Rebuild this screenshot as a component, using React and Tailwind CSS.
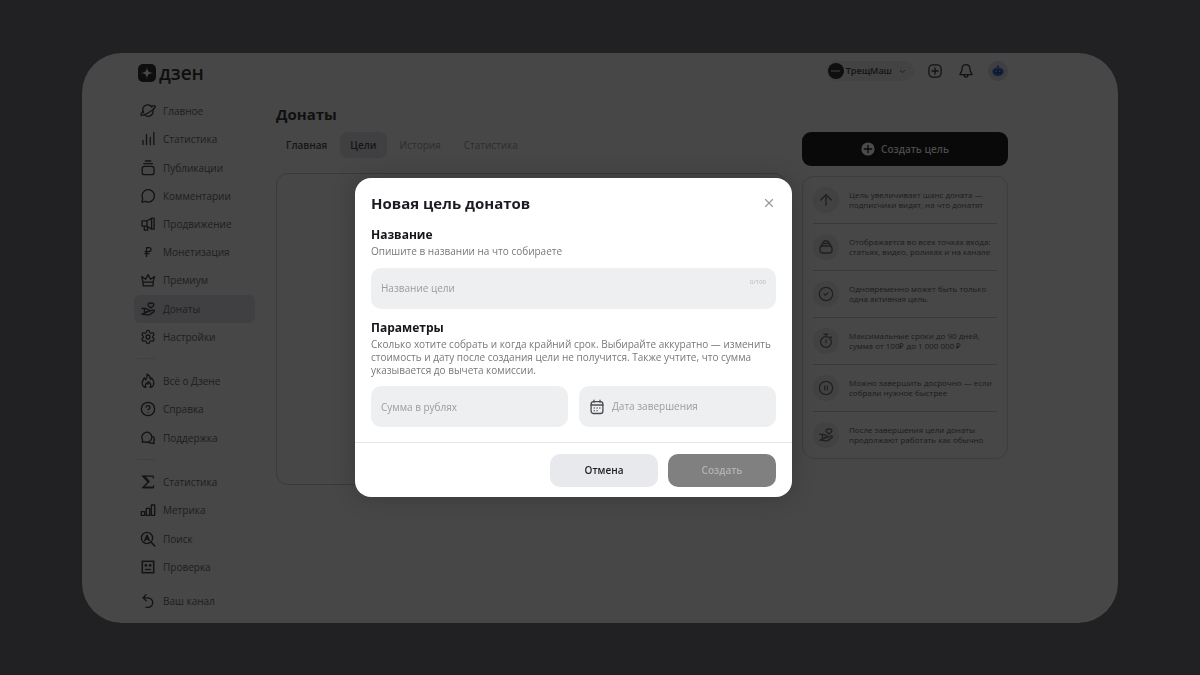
import { useState } from "react";
import { ArrowUp, ChevronDown, CircleCheck, CircleHelp, CirclePause, RussianRuble, Settings, X } from "lucide-react";

function Icon({ children, className = "size-4" }) {
  return (
    <svg
      viewBox="0 0 16 16"
      fill="none"
      stroke="currentColor"
      strokeWidth="1.3"
      strokeLinecap="round"
      strokeLinejoin="round"
      aria-hidden="true"
      className={className}
    >
      {children}
    </svg>
  );
}

const PlanetIcon = () => (
  <Icon>
    <path d="M3.5 9.600A4.900 4.900 0 0 1 11.800 4.100M12.800 6.900a4.900 4.900 0 0 1-7.600 5.400" />
    <path d="M11.400 3.300c1.900-.7 3.400-.8 3.800-.2.6 1-2.100 3.800-5.900 6.100-3.800 2.400-7.800 3.800-8.400 2.800-.4-.7.7-2.100 2.600-3.700" />
  </Icon>
);

const BarsIcon = () => (
  <Icon>
    <path d="M3 9.4v4.2M6.500 3.400v10.200M10.300 6.400v7.200M13.800 1.400v12.200" />
  </Icon>
);

const StackIcon = () => (
  <Icon>
    <rect x="2.2" y="6.3" width="11.8" height="8.4" rx="2.2" />
    <path d="M3.800 3.600h8.600M5.400 1h5.400" />
  </Icon>
);

const BubbleIcon = () => (
  <Icon>
    <path d="M2 14.100l.7-3.500A6.200 6.200 0 1 1 5.500 13.400z" />
  </Icon>
);

const MegaphoneIcon = () => (
  <Icon>
    <path d="M2 4.800h5l4.600-2.600h2.500v10.900h-2.500L7 10.200H2zM7 4.800v5.400M11.600 2.400v10.400M4.300 10.200v3.900h3.500l-.7-3.800" />
  </Icon>
);

const CrownIcon = () => (
  <Icon>
    <path d="M1.700 4.600l4 2.600L8.100 2.600l2.400 4.600 4-2.600-1.400 5.600v3.600H3.100v-3.600zM3.100 10.200h10" />
  </Icon>
);

const HandHeartIcon = () => (
  <Icon>
    <path d="M1.800 7.400h3.400l3.600 1.400c1.100.5.8 1.900-.3 1.900H6.200M9.400 10.200l3.600-1.200c1.300-.4 1.900.9.900 1.600l-4.300 3c-.5.3-1 .4-1.600.3l-6.200-.7zM4.400 7.500v5.800" />
    <path d="M10.900 7 8.500 4.700a1.600 1.600 0 0 1 2.400-2.200 1.600 1.600 0 0 1 2.500 2.200z" />
  </Icon>
);

const FlameIcon = () => (
  <Icon>
    <path d="M5.700 14.400C3.500 13.900 2.200 12.200 2.200 10c0-2.200 1.500-3.300 2-5.200 1 .5 1.400 1.200 1.500 2C7 5.300 7.600 3.500 7 1.200c2 1 3.300 2.700 3.500 5.100.5-.3.8-.7 1-1.300 1.500 1.500 2.300 3.200 2.300 5 0 2.200-1.300 3.900-3.500 4.400" />
    <path d="M5.700 14.200c-.9-1.900-.2-3.100.8-4.300.6.3.9.7 1 1.300.8-.8 1-1.600.8-2.600 2 1.300 3 3.400 1.900 5.600" />
  </Icon>
);

const ChatsIcon = () => (
  <Icon>
    <path d="M2.200 12.200l.4-2.400a5 5 0 1 1 2.300 2z" />
    <path d="M12.800 6.500c1.600 1.200 1.900 3 .9 4.600l.4 2.600-2.200-.7c-1.400.4-2.700.1-3.700-.7" />
  </Icon>
);

const SigmaIcon = () => (
  <Icon>
    <path d="M13.500 4.300 13 2.200H2.800L8.400 8l-5.600 5.700h10.400l.7-2.300" strokeLinecap="butt" strokeLinejoin="miter" />
    <path d="M4 2.600 9 8" strokeWidth="2.200" strokeLinecap="butt" />
    <path d="M3.500 13.400h9.800" strokeWidth="1.700" strokeLinecap="butt" />
  </Icon>
);

const MetricaIcon = () => (
  <Icon>
    <path d="M1.300 9.600h3.400v3.700H1.300zM6.300 6.400h3.400v6.900H6.300zM11.300 3h3.400v10.300h-3.400z" />
  </Icon>
);

const SearchIcon = () => (
  <Icon>
    <circle cx="7" cy="7" r="5.6" />
    <path d="M11.100 11.100l3.600 3.800M4.800 9.600 7 4.300l2.200 5.300M5.500 8.100h3" strokeWidth="1.500" />
  </Icon>
);

const FaceIcon = () => (
  <Icon>
    <rect x="2.300" y="2.300" width="11.400" height="11.400" strokeLinejoin="miter" strokeWidth="1.500" />
    <path d="M4.800 10.500h6.400" strokeLinecap="butt" />
    <circle cx="5.900" cy="6.400" r="1.400" fill="currentColor" stroke="none" />
    <circle cx="10.100" cy="6.400" r="1.400" fill="currentColor" stroke="none" />
  </Icon>
);

const BackIcon = () => (
  <Icon>
    <path d="M6 1.800 3 4.900l3.200 3M3 4.900h5a4.700 4.700 0 0 1 0 9.400H6" />
  </Icon>
);

const TimerIcon = () => (
  <Icon>
    <circle cx="8" cy="9" r="5.4" />
    <path d="M6 1.200h4M8 1.200v2.200M8 7v2.600M12.600 3.700l.8.8" />
  </Icon>
);

const BagIcon = () => (
  <Icon>
    <rect x="2" y="7" width="12" height="7" rx="2.500" />
    <path d="M3.200 7c.2-1.800.9-2.500 2.200-2.500h5.200c1.300 0 2 .7 2.200 2.500M4.900 4.400C5.200 2.700 5.900 2 7 2h2c1.100 0 1.800.7 2.100 2.400" />
  </Icon>
);

const CalendarIcon = () => (
  <Icon className="size-4 shrink-0">
    <rect x="2.100" y="2.700" width="11.800" height="11.800" rx="2.600" />
    <path d="M2.200 6h11.600M5 1.200v2M11 1.200v2" />
    <path d="M5.200 9h.1M8 9h.1M10.800 9h.1M5.200 11.700h.1M8 11.700h.1" />
  </Icon>
);

const NAV = [
  {
    rows: "h-[254px]",
    items: [
      ["Главное", PlanetIcon],
      ["Статистика", BarsIcon],
      ["Публикации", StackIcon],
      ["Комментарии", BubbleIcon],
      ["Продвижение", MegaphoneIcon],
      ["Монетизация", () => <RussianRuble className="size-3" strokeWidth={2.5} />],
      ["Премиум", CrownIcon],
      ["Донаты", HandHeartIcon],
      ["Настройки", () => <Settings className="size-4" strokeWidth={1.9} />],
    ],
  },
  {
    rows: "h-[85px]",
    items: [
      ["Всё о Дзене", FlameIcon],
      ["Справка", () => <CircleHelp className="size-4" strokeWidth={2} />],
      ["Поддержка", ChatsIcon],
    ],
  },
  {
    rows: "h-[113px]",
    items: [
      ["Статистика", SigmaIcon],
      ["Метрика", MetricaIcon],
      ["Поиск", SearchIcon],
      ["Проверка", FaceIcon],
    ],
  },
];

const TIPS = [
  [<ArrowUp className="size-[18px]" strokeWidth={1.8} />, "Цель увеличивает шанс доната —", "подписчики видят, на что донатят"],
  [<BagIcon />, "Отображается во всех точках входа:", "статьях, видео, роликах и на канале"],
  [<CircleCheck className="size-4" strokeWidth={1.8} />, "Одновременно может быть только", "одна активная цель."],
  [<TimerIcon />, "Максимальные сроки до 90 дней,", "сумма от 100₽ до 1 000 000 ₽"],
  [<CirclePause className="size-4" strokeWidth={1.8} />, "Можно завершить досрочно — если", "собрали нужное быстрее"],
  [<HandHeartIcon />, "После завершения цели донаты", "продолжают работать как обычно"],
];

function NavItem({ label, icon: Glyph, active }) {
  return (
    <a
      href="#"
      className={`flex min-h-0 items-center gap-[7px] rounded-md pl-[6px] text-[10px] leading-4 text-[#1d1d1e] ${active ? "bg-[#404042]" : ""}`}
    >
      <span className="flex size-4 items-center justify-center text-[#131314]">
        <Glyph />
      </span>
      {label}
    </a>
  );
}

function Sidebar() {
  return (
    <nav className="w-[121px] shrink-0">
      {NAV.map((group, i) => (
        <div key={group.rows}>
          {i > 0 && <div className="mt-[7px] mb-2 ml-[3px] h-px w-[18px] bg-[#404040]" />}
          <div className={`grid auto-rows-fr ${group.rows}`}>
            {group.items.map(([label, icon]) => (
              <NavItem key={label} label={label} icon={icon} active={label === "Донаты"} />
            ))}
          </div>
        </div>
      ))}
      <div className="mt-[6px] grid h-[28px]">
        <NavItem label="Ваш канал" icon={BackIcon} />
      </div>
    </nav>
  );
}

function TopBar() {
  return (
    <header className="flex h-[44px] items-start justify-between pt-2">
      <a href="#" className="flex items-center gap-[3px] pt-[2px] pl-1 text-[#0e0e0f]">
        <svg viewBox="0 0 18 18" aria-hidden="true" className="size-[18px]">
          <rect width="18" height="18" rx="5" fill="currentColor" />
          <path d="M9 2.500c.2 4.600 1.900 6.300 6.500 6.500-4.600.2-6.300 1.900-6.500 6.500-.2-4.600-1.900-6.300-6.500-6.500 4.600-.2 6.300-1.900 6.500-6.500z" fill="#474747" />
        </svg>
        <span className="text-[19px] leading-5 font-semibold">дзен</span>
      </a>
      <div className="flex items-center text-[#131314]">
        <button type="button" className="flex h-5 items-center rounded-full bg-[#434343] pr-[7px] pl-px text-[9px] leading-4 font-semibold">
          <span className="mr-[2px] flex size-4 items-center rounded-full bg-[#0f0f10]">
            <span className="mx-auto h-[2px] w-[9px] bg-[#29292a]" />
          </span>
          ТрещМаш
          <ChevronDown className="ml-[6px] size-[9px]" />
        </button>
        <button type="button" aria-label="Добавить" className="ml-[13px]">
          <Icon>
            <rect x="1.900" y="1.900" width="12.200" height="12.200" rx="4" />
            <path d="M8 5v6M5 8h6" />
          </Icon>
        </button>
        <button type="button" aria-label="Уведомления" className="ml-[15px]">
          <Icon>
            <path d="M8 1.700c-2.500 0-3.800 1.700-3.900 4-.1 2.300-.9 3.700-2.200 5.900h12.200c-1.300-2.200-2.100-3.600-2.200-5.900-.1-2.300-1.400-4-3.900-4zM6 11.700c.1 3.200 3.900 3.200 4 0" />
          </Icon>
        </button>
        <button type="button" aria-label="Профиль" className="ml-[14px] flex size-5 items-center justify-center rounded-full bg-[#3e3e43]">
          <svg viewBox="0 0 14 14" aria-hidden="true" className="size-[14px]">
            <path d="M7 1.500v2" stroke="#15203a" strokeWidth="2" />
            <ellipse cx="7" cy="7.700" rx="5.700" ry="4.200" fill="#15203a" />
            <rect x="3.500" y="6" width="7" height="3.500" rx="1.700" fill="#0c1427" />
            <circle cx="5.300" cy="7.500" r=".7" fill="#3a4458" />
            <circle cx="8.700" cy="7.500" r=".7" fill="#3a4458" />
          </svg>
        </button>
      </div>
    </header>
  );
}

function Goals() {
  return (
    <section className="min-w-0 flex-1">
      <h1 className="pt-[7px] text-[15px] leading-5 font-bold text-[#101011]">Донаты</h1>
      <div className="mt-2 flex h-[26px] text-[10px] leading-[26px] font-semibold">
        <button type="button" className="px-[10px] text-[#151516]">Главная</button>
        <button type="button" className="ml-[3px] rounded-lg bg-[#404042] px-[10px] text-[#151516]">Цели</button>
        <button type="button" className="ml-[3px] px-[10px] font-medium text-[#2d2d2d]">История</button>
        <button type="button" className="ml-[3px] px-[10px] font-medium text-[#2d2d2d]">Статистика</button>
      </div>
      <div className="mt-[15px] h-[312px] rounded-xl border border-[#3a3a3a]" />
    </section>
  );
}

function Tips() {
  return (
    <aside className="w-[206px] shrink-0 pt-[35px]">
      <button type="button" className="flex h-[34px] w-full items-center justify-center gap-[6px] rounded-[9px] bg-[#090909] text-[10px] font-semibold text-[#4b4b4b]">
        <svg viewBox="0 0 14 14" aria-hidden="true" className="size-[14px]">
          <circle cx="7" cy="7" r="6.600" fill="currentColor" />
          <path d="M7 3.300v7.400M3.300 7h7.400" stroke="#090909" strokeWidth="1.300" strokeLinecap="round" />
        </svg>
        Создать цель
      </button>
      <ul className="mt-[10px] rounded-xl border border-[#3d3d3d] px-[10px]">
        {TIPS.map(([icon, first, second]) => (
          <li key={first} className="flex h-[47px] items-center gap-[10px] border-b border-[#3a3a3a] last:h-[46px] last:border-0">
            <span className="flex size-[26px] shrink-0 items-center justify-center rounded-full bg-[#424242] text-[#202021]">{icon}</span>
            <p className="text-[8px] leading-[10px] whitespace-nowrap text-[#1b1b1c]">
              {first}
              <br />
              {second}
            </p>
          </li>
        ))}
      </ul>
    </aside>
  );
}

function GoalDialog() {
  const [name, setName] = useState("");

  return (
    <div className="fixed inset-0 flex items-center justify-center pr-[53px]">
      <form
        role="dialog"
        aria-labelledby="goal-title"
        onSubmit={(e) => e.preventDefault()}
        className="w-[437px] rounded-2xl bg-white shadow-[0_0_24px_rgba(0,0,0,0.2)]"
      >
        <div className="px-4 pt-[15px] pb-[15px]">
          <div className="flex items-center justify-between">
            <h2 id="goal-title" className="text-[15px] leading-5 font-bold text-[#1b1c21]">Новая цель донатов</h2>
            <button type="button" aria-label="Закрыть" className="text-[#98999c]">
              <X className="size-[14px]" strokeWidth={2} />
            </button>
          </div>

          <label htmlFor="goal-name" className="mt-[14px] block text-[12px] leading-4 font-bold text-[#15161a]">Название</label>
          <p className="mt-[2px] text-[10px] leading-[13px] text-[#77787b]">Опишите в названии на что собираете</p>
          <div className="mt-[10px] flex h-[41px] rounded-[10px] bg-[#eeeff1] px-[10px]">
            <input
              id="goal-name"
              maxLength={100}
              value={name}
              onChange={(e) => setName(e.target.value)}
              placeholder="Название цели"
              className="min-w-0 flex-1 bg-transparent text-[10px] outline-none placeholder:text-[#9b9ca0]"
            />
            <span className="mt-[10px] text-[6px] leading-2 text-[#b3b4b8]">{name.length}/100</span>
          </div>

          <h3 className="mt-[11px] text-[12px] leading-4 font-bold text-[#15161a]">Параметры</h3>
          <p className="mt-[2px] text-[10px] leading-[13px] text-[#77787b]">
            Сколько хотите собрать и когда крайний срок. Выбирайте аккуратно — изменить стоимость и дату после создания цели не получится. Также учтите, что сумма указывается до вычета комиссии.
          </p>
          <div className="mt-[9px] grid grid-cols-2 gap-[11px]">
            <input
              aria-label="Сумма в рублях"
              placeholder="Сумма в рублях"
              className="h-[41px] min-w-0 rounded-[10px] bg-[#eeeff1] px-[10px] text-[10px] outline-none placeholder:text-[#9b9ca0]"
            />
            <label className="flex h-[41px] items-center gap-[7px] rounded-[10px] bg-[#eeeff1] px-[10px] text-[#4a4b4f]">
              <CalendarIcon />
              <input
                aria-label="Дата завершения"
                placeholder="Дата завершения"
                className="min-w-0 flex-1 bg-transparent text-[10px] outline-none placeholder:text-[#9b9ca0]"
              />
            </label>
          </div>
        </div>

        <div className="flex justify-end gap-[10px] border-t border-[#e6e6e8] px-4 pt-[11px] pb-[10px] text-[10px] font-semibold">
          <button type="button" className="h-[33px] w-[108px] rounded-[10px] bg-[#e8e9ed] text-[#1e1f23]">Отмена</button>
          <button type="submit" className="h-[33px] w-[108px] rounded-[10px] bg-[#808080] text-[#b2b2b2]">Создать</button>
        </div>
      </form>
    </div>
  );
}

export default function App() {
  return (
    <main className="min-h-screen bg-[#212123] px-[82px] py-[53px] font-['Open_Sans',sans-serif]">
      <div className="rounded-[40px] bg-[#474747] pr-[110px] pb-[8px] pl-[52px]">
        <TopBar />
        <div className="flex">
          <Sidebar />
          <div className="ml-[21px] flex min-w-0 flex-1 gap-4">
            <Goals />
            <Tips />
          </div>
        </div>
      </div>
      <GoalDialog />
    </main>
  );
}
